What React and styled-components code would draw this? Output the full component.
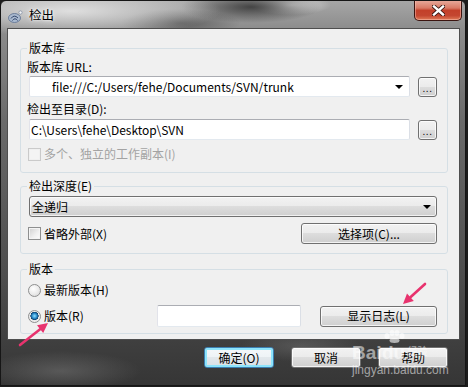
import React from 'react';
import styled, { createGlobalStyle } from 'styled-components';

const GlobalStyle = createGlobalStyle`
  html, body {
    margin: 0;
    padding: 0;
    background: #1c1c1c;
  }
  body {
    font-family: "Noto Sans CJK SC", "Noto Sans", sans-serif;
    font-size: 12px;
    color: #000;
  }
`;

// Aero glass window frame
const Window = styled.div`
  position: relative;
  width: 466px;
  height: 386px;
  box-sizing: border-box;
  border: 1px solid #161616;
  border-radius: 6px 6px 0 0;
  overflow: hidden;
  display: flex;
  flex-direction: column;
  background:
    radial-gradient(ellipse 150px 26px at 70px 10px, rgba(230, 230, 230, 0.9), transparent),
    radial-gradient(ellipse 70px 16px at 250px 6px, rgba(45, 45, 45, 0.8), transparent),
    radial-gradient(ellipse 40px 10px at 290px 4px, rgba(240, 240, 240, 0.8), transparent),
    radial-gradient(ellipse 60px 14px at 180px 22px, rgba(60, 60, 60, 0.6), transparent),
    radial-gradient(ellipse 80px 20px at 60px 370px, rgba(110, 110, 110, 0.6), transparent),
    radial-gradient(ellipse 60px 16px at 300px 345px, rgba(110, 110, 110, 0.5), transparent),
    linear-gradient(180deg, #a6a6a6 0px, #8c8c8c 28px, #6a6a6a 120px, #4c4c4c 280px, #353535 386px);
`;

const TitleBar = styled.div`
  height: 27px;
  flex: none;
  display: flex;
  align-items: flex-start;
`;

const AppIcon = styled.svg`
  flex: none;
  margin: 9px 0 0 7px;
  width: 15px;
  height: 13px;
`;

const Title = styled.div`
  margin: 6px 0 0 6px;
  font-size: 12.5px;
  line-height: 16px;
  text-shadow: 0 0 5px rgba(255, 255, 255, 0.95), 0 0 2px rgba(255, 255, 255, 0.95);
`;

const CloseButton = styled.div`
  flex: none;
  margin: -1px 3px 0 auto;
  width: 48px;
  height: 21px;
  box-sizing: border-box;
  border: 1px solid #3b1410;
  border-top: none;
  border-radius: 0 0 5px 5px;
  background: linear-gradient(180deg, #e9ad9f 0%, #d97a66 40%, #c3402a 52%, #c44630 78%, #e07b58 100%);
  box-shadow: inset 0 0 0 1px rgba(255, 205, 195, 0.45);
  display: flex;
  align-items: center;
  justify-content: center;
`;

const Client = styled.div`
  flex: none;
  margin: 0 5px 0 6px;
  height: 312px;
  box-sizing: border-box;
  border: 1px solid #4e4e4e;
  background: #f0f0f0;
  padding: 11px 11px 0 12px;
`;

const Group = styled.fieldset`
  margin: ${p => p.$top}px 0 0;
  padding: 0 10px ${p => p.$bottom}px 8px;
  border: 1px solid #d5dfe5;
  border-radius: 3px;
  min-width: 0;
`;

const Legend = styled.legend`
  padding: 0 2px;
  margin-left: -2px;
  line-height: 16px;
`;

const FieldLabel = styled.div`
  line-height: 16px;
  margin: ${p => p.$top}px 0 0 -2px;
`;

const Row = styled.div`
  display: flex;
  align-items: center;
  gap: ${p => p.$gap}px;
  margin-top: ${p => p.$top}px;
`;

const SpreadRow = styled(Row)`
  justify-content: space-between;
`;

const TextBox = styled.div`
  flex: ${p => (p.$width ? 'none' : '1')};
  width: ${p => (p.$width ? `${p.$width}px` : 'auto')};
  height: ${p => p.$height || 21}px;
  box-sizing: border-box;
  border: 1px solid;
  border-color: #abadb3 #dbdfe6 #e3e9ef #e2e3ea;
  border-radius: 2px;
  background: #fff;
  display: flex;
  align-items: center;
  padding: 0 6px 0 ${p => p.$pad || 1}px;
  white-space: nowrap;
  overflow: hidden;
`;

const DropArrow = styled.span`
  margin-left: auto;
  width: 0;
  height: 0;
  border-left: 4px solid transparent;
  border-right: 4px solid transparent;
  border-top: 4px solid #000;
`;

const DropList = styled.div`
  height: 21px;
  margin-top: 2px;
  box-sizing: border-box;
  border: 1px solid #707070;
  border-radius: 3px;
  background: linear-gradient(#f2f2f2 0%, #ebebeb 49%, #dddddd 50%, #cfcfcf 100%);
  box-shadow: inset 0 0 0 1px rgba(255, 255, 255, 0.7);
  display: flex;
  align-items: center;
  padding: 0 5px 0 2px;
`;

const Button = styled.div`
  flex: none;
  width: ${p => p.$w}px;
  height: ${p => p.$h || 21}px;
  box-sizing: border-box;
  border: 1px solid ${p => (p.$default ? '#3c7fb1' : '#707070')};
  border-radius: 3px;
  background: ${p => (p.$default
    ? 'linear-gradient(#f4f8fa 0%, #eef3f6 49%, #e2e8ec 50%, #d8e0e5 100%)'
    : 'linear-gradient(#f2f2f2 0%, #ebebeb 49%, #dddddd 50%, #cfcfcf 100%)')};
  box-shadow: inset 0 0 0 ${p => (p.$default ? '2px #8de4fb' : '1px rgba(255, 255, 255, 0.75)')};
  display: flex;
  align-items: center;
  justify-content: center;
  line-height: 1;
`;

const Dots = styled.span`
  font-family: "Liberation Sans", sans-serif;
  font-size: 10px;
  letter-spacing: 0.5px;
  margin-top: 5px;
`;

const CheckRow = styled.div`
  display: flex;
  align-items: center;
  gap: 3px;
  line-height: 16px;
  margin-left: -1px;
  color: ${p => (p.$disabled ? '#a3a3a3' : '#000')};
`;

const CheckBox = styled.span`
  flex: none;
  width: 13px;
  height: 13px;
  box-sizing: border-box;
  border: 1px solid ${p => (p.$disabled ? '#cacaca' : '#8e8f8f')};
  background: ${p => (p.$disabled ? '#f4f4f4' : 'linear-gradient(135deg, #cfcfcf 0%, #f0f0f0 60%, #fdfdfd 100%)')};
  box-shadow: inset 0 0 0 1px ${p => (p.$disabled ? '#f0f0f0' : '#f4f4f4')};
`;

const Radio = styled.span`
  flex: none;
  width: 13px;
  height: 13px;
  box-sizing: border-box;
  border-radius: 50%;
  border: 1px solid #8e8f8f;
  background: ${p => (p.$checked
    ? 'radial-gradient(circle at 50% 45%, #8fe0ff 0%, #2a8ccc 30%, #0d3f6b 48%, #e8e8e8 52%, #fbfbfb 100%)'
    : 'radial-gradient(circle at 40% 35%, #ffffff 0%, #ececec 50%, #d2d2d2 100%)')};
`;

const RadioRow = styled(CheckRow)`
  width: ${p => (p.$width ? `${p.$width}px` : 'auto')};
  flex: none;
`;

const ButtonBar = styled.div`
  display: flex;
  justify-content: flex-end;
  gap: 17px;
  padding: 7px 17px 0 0;
`;

const Arrow = styled.svg`
  position: absolute;
  left: ${p => p.$x}px;
  top: ${p => p.$y}px;
`;

const Watermark = styled.div`
  position: absolute;
  left: 351px;
  top: 331px;
  color: rgba(255, 255, 255, 0.55);
  pointer-events: none;
`;

const MarkLogo = styled.div`
  display: flex;
  align-items: flex-end;
  font-family: "Liberation Sans", sans-serif;
  font-weight: bold;
  font-size: 19px;
  line-height: 19px;
  height: 30px;
`;

const MarkPaw = styled.div`
  display: flex;
  flex-direction: column;
  align-items: center;
`;

const MarkSmall = styled.span`
  font-size: 10px;
  line-height: 12px;
  font-weight: normal;
  font-family: "Noto Sans CJK SC", sans-serif;
  margin: 0 0 5px 2px;
`;

const MarkUrl = styled.div`
  font-family: "Liberation Sans", sans-serif;
  font-size: 12px;
  line-height: 14px;
  margin-top: 1px;
`;

const ArrowShape = ({ x, y, w, h, tail, head, base, c1, c2 }) => (
  <Arrow $x={x} $y={y} width={w} height={h} viewBox={`0 0 ${w} ${h}`}>
    <line x1={tail[0]} y1={tail[1]} x2={base[0]} y2={base[1]} stroke="#e8336e" strokeWidth="2.6" strokeLinecap="round" />
    <polygon points={`${head[0]},${head[1]} ${c1[0]},${c1[1]} ${c2[0]},${c2[1]}`} fill="#e8336e" />
  </Arrow>
);

const App = () => (
  <>
    <GlobalStyle />
    <Window>
      <TitleBar>
        <AppIcon viewBox="0 0 15 13">
          <ellipse cx="6.5" cy="8" rx="6" ry="4.5" fill="#a9b9cf" stroke="#5b6f8f" strokeWidth="0.8" />
          <path d="M3 8.5 Q6 4 10 8 M4.5 10.5 Q7 7 9.5 10.5" stroke="#32466b" strokeWidth="1" fill="none" />
          <circle cx="12.5" cy="2.5" r="1.6" fill="#f4f4f4" stroke="#5b6f8f" strokeWidth="0.5" />
        </AppIcon>
        <Title>检出</Title>
        <CloseButton>
          <svg width="13" height="11" viewBox="0 0 13 11">
            <path d="M2 1.5 L11 9.5 M11 1.5 L2 9.5" stroke="#3a1712" strokeWidth="4.2" strokeLinecap="square" />
            <path d="M2 1.5 L11 9.5 M11 1.5 L2 9.5" stroke="#fff" strokeWidth="2.4" strokeLinecap="square" />
          </svg>
        </CloseButton>
      </TitleBar>

      <Client>
        <Group $top={0} $bottom={10}>
          <Legend>版本库</Legend>
          <FieldLabel $top={3}>版本库 URL:</FieldLabel>
          <Row $gap={8} $top={1}>
            <TextBox $pad={22}>
              file:///C:/Users/fehe/Documents/SVN/trunk
              <DropArrow />
            </TextBox>
            <Button $w={19} $h={20}><Dots>...</Dots></Button>
          </Row>
          <FieldLabel $top={4}>检出至目录(D):</FieldLabel>
          <Row $gap={8} $top={2}>
            <TextBox $pad={1}>C:\Users\fehe\Desktop\SVN</TextBox>
            <Button $w={19} $h={20}><Dots>...</Dots></Button>
          </Row>
          <Row $gap={0} $top={6}>
            <CheckRow $disabled>
              <CheckBox $disabled />
              多个、独立的工作副本(I)
            </CheckRow>
          </Row>
        </Group>

        <Group $top={5} $bottom={9}>
          <Legend>检出深度(E)</Legend>
          <DropList>
            全递归
            <DropArrow />
          </DropList>
          <SpreadRow $gap={0} $top={6}>
            <CheckRow>
              <CheckBox />
              省略外部(X)
            </CheckRow>
            <Button $w={136}>选择项(C)...</Button>
          </SpreadRow>
        </Group>

        <Group $top={7} $bottom={6}>
          <Legend>版本</Legend>
          <Row $gap={0} $top={5}>
            <RadioRow>
              <Radio />
              最新版本(H)
            </RadioRow>
          </Row>
          <Row $gap={19} $top={7}>
            <RadioRow $width={110}>
              <Radio $checked />
              版本(R)
            </RadioRow>
            <TextBox $width={144} $height={22} />
            <Button $w={117}>显示日志(L)</Button>
          </Row>
        </Group>
      </Client>

      <ButtonBar>
        <Button $w={70} $default>确定(O)</Button>
        <Button $w={70}>取消</Button>
        <Button $w={70}>帮助</Button>
      </ButtonBar>

      <ArrowShape
        x={398} y={279} w={30} h={28}
        tail={[26, 4]} head={[4, 24]} base={[11.4, 17.3]}
        c1={[14.8, 21]} c2={[8, 13.6]}
      />
      <ArrowShape
        x={15} y={318} w={36} h={30}
        tail={[4, 26]} head={[32, 4]} base={[24.1, 10.2]}
        c1={[27.2, 14.1]} c2={[21, 6.3]}
      />

      <Watermark>
        <MarkLogo>
          Bai
          <MarkPaw>
            <svg width="24" height="13" viewBox="0 0 24 13">
              <ellipse cx="5" cy="6" rx="2.5" ry="3" fill="rgba(255,255,255,0.6)" />
              <ellipse cx="10" cy="3" rx="2.5" ry="3" fill="rgba(255,255,255,0.6)" />
              <ellipse cx="15" cy="3" rx="2.5" ry="3" fill="rgba(255,255,255,0.6)" />
              <ellipse cx="20" cy="6" rx="2.5" ry="3" fill="rgba(255,255,255,0.6)" />
              <ellipse cx="12.5" cy="10.5" rx="5" ry="2.5" fill="rgba(255,255,255,0.6)" />
            </svg>
            du
          </MarkPaw>
          <MarkSmall>经验</MarkSmall>
        </MarkLogo>
        <MarkUrl>jingyan.baidu.com</MarkUrl>
      </Watermark>
    </Window>
  </>
);

export default App;
